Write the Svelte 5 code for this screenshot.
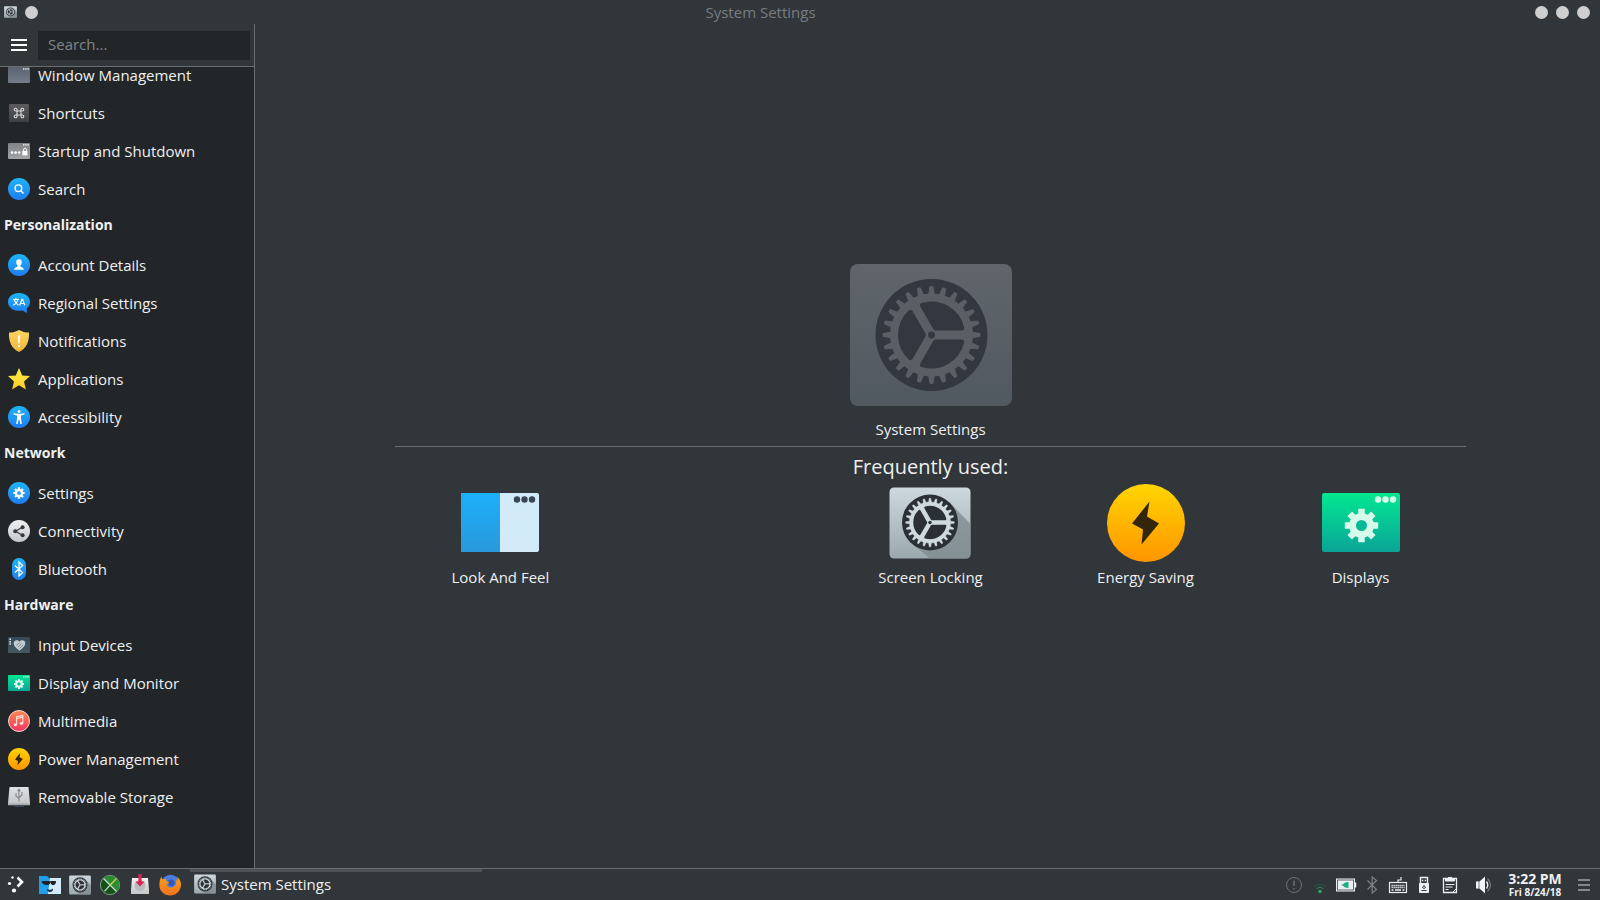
<script>
  let query = $state('');

  const sections = [
    {
      title: '',
      items: [
        ['window', 'Window Management'],
        ['shortcuts', 'Shortcuts'],
        ['startup', 'Startup and Shutdown'],
        ['search', 'Search']
      ]
    },
    {
      title: 'Personalization',
      items: [
        ['account', 'Account Details'],
        ['regional', 'Regional Settings'],
        ['notifications', 'Notifications'],
        ['applications', 'Applications'],
        ['accessibility', 'Accessibility']
      ]
    },
    {
      title: 'Network',
      items: [
        ['settings', 'Settings'],
        ['connectivity', 'Connectivity'],
        ['bluetooth', 'Bluetooth']
      ]
    },
    {
      title: 'Hardware',
      items: [
        ['input', 'Input Devices'],
        ['display', 'Display and Monitor'],
        ['multimedia', 'Multimedia'],
        ['power', 'Power Management'],
        ['storage', 'Removable Storage']
      ]
    }
  ];

  const launchers = [
    ['files', 'File manager'],
    ['gear', 'System Settings'],
    ['green', 'Graphics'],
    ['download', 'Downloads'],
    ['firefox', 'Firefox']
  ];

  const tray = [
    ['alert', 'Alerts'],
    ['wifi', 'Wireless'],
    ['battery', 'Battery'],
    ['bt', 'Bluetooth'],
    ['keyboard', 'Keyboard'],
    ['usb', 'Devices'],
    ['clipboard', 'Clipboard']
  ];

  // Closed outline of a gear centred on the origin.
  function gear(teeth, outer, root, topHalf, rootHalf) {
    const at = (r, deg) => {
      const a = (deg * Math.PI) / 180;
      return (r * Math.cos(a)).toFixed(2) + ' ' + (r * Math.sin(a)).toFixed(2);
    };
    let d = '';
    for (let i = 0; i < teeth; i++) {
      const c = (360 / teeth) * i;
      d += (i ? 'L' : 'M') + at(root, c - rootHalf) + 'L' + at(outer, c - topHalf);
      d += 'L' + at(outer, c + topHalf) + 'L' + at(root, c + rootHalf);
    }
    return d + 'Z';
  }

  const fineGear = gear(24, 48.5, 41, 1.7, 3.8);
  const cog = gear(8, 17, 12.5, 11, 15);
</script>

{#snippet wheel(metal, dark)}
  <circle r="56" fill={dark} />
  <path d={fineGear} fill={metal} stroke={metal} stroke-linejoin="round" />
  {#each [0, 120, 240] as turn}
    <path
      d="M4.04-7H30.2A31 31 0 0 0-9.04-29.65Z"
      transform="rotate({turn})"
      fill={dark}
      stroke={dark}
      stroke-width="5"
      stroke-linejoin="round"
    />
  {/each}
  <circle r="3.4" fill={dark} />
{/snippet}

{#snippet plate()}
  <rect x="1" y="11" width="162" height="142" rx="9" fill="url(#g-plate)" />
  <path d="M122 42L163 84V144Q163 153 154 153H82L43 121Z" fill="#7d888d" opacity=".75" />
  <g transform="translate(82 81)">{@render wheel('#cfdadf', '#2b3036')}</g>
{/snippet}

{#snippet cogShape(fill, hole)}
  <path d={cog} fill={fill} />
  <circle r="5.5" fill={hole} />
{/snippet}

{#snippet sideIcon(name)}
  <svg class="side-icon" viewBox="0 0 22 22" aria-hidden="true">
    {#if name === 'window'}
      <rect y="3" width="22" height="16" rx="1" fill="url(#g-slate)" />
      <path d="M15 5h1.4M17.2 5h1.4M19.4 5h1.4" stroke="#e5e9ec" stroke-width="1.3" />
    {:else if name === 'shortcuts'}
      <rect x="1" y="2" width="20" height="18" rx="1" fill="url(#g-dark)" />
      <path
        d="M9 9h4v4H9ZM9 9H7.8A1.4 1.4 0 1 1 9 7.8ZM13 9V7.8A1.4 1.4 0 1 1 14.2 9ZM13 13h1.2A1.4 1.4 0 1 1 13 14.2ZM9 13v1.2A1.4 1.4 0 1 1 7.8 13Z"
        fill="none" stroke="#dcdcdc" stroke-width="1.1"
      />
    {:else if name === 'startup'}
      <rect y="3" width="22" height="16" rx="1" fill="url(#g-grey)" />
      <path d="M15 4.8h1.4M17.2 4.8h1.4M19.4 4.8h1.4" stroke="#fff" stroke-width="1.3" />
      <circle cx="4" cy="12.6" r="1.3" fill="#fff" />
      <circle cx="7.6" cy="12.6" r="1.3" fill="#fff" />
      <circle cx="11.2" cy="12.6" r="1.3" fill="#fff" />
      <rect x="14.4" y="11" width="5" height="4.4" fill="#fff" />
      <path d="M15.6 11V9.6a1.4 1.4 0 0 1 2.8 0V11" fill="none" stroke="#fff" />
    {:else if name === 'search'}
      <circle cx="11" cy="11" r="11" fill="url(#g-blue)" />
      <circle cx="10.4" cy="10.2" r="3.3" fill="none" stroke="#fff" stroke-width="1.4" />
      <path d="M12.8 12.6L15.4 15.4" stroke="#fff" stroke-width="1.5" />
    {:else if name === 'account'}
      <circle cx="11" cy="11" r="11" fill="url(#g-blue)" />
      <path
        d="M11 5.2c1.8 0 2.8 1.3 2.8 3 0 1.500-.6 2.500-1.400 3v1.200c.8.8 3.400.8 3.600 3.400H6c.2-2.600 2.800-2.600 3.600-3.400v-1.200c-.8-.5-1.400-1.500-1.400-3 0-1.700 1-3 2.800-3Z"
        fill="#fff"
      />
    {:else if name === 'regional'}
      <path d="M11 1c6.200 0 11 3.800 11 9 0 2.700-1.300 5-3.300 6.600L19 21l-4.700-2.400C6.400 19.800 0 16 0 10c0-5.200 4.800-9 11-9Z" fill="url(#g-blue)" />
      <path d="M5 7.500h6M8 6v1.500M9.800 7.500C9.300 10.300 7.500 12 5.200 13.200M6.300 7.500c.5 2.500 2 4.500 4.400 5.700M11.700 13.400l2.200-6h.7l2.200 6M12.500 11.500h3.500" fill="none" stroke="#fff" stroke-width="1.2" />
    {:else if name === 'notifications'}
      <path d="M11 0c3 1.700 6.500 2.500 10 2.600C21.400 12 18.500 18.600 11 22 3.500 18.600.6 12 1 2.600 4.500 2.500 8 1.700 11 0Z" fill="url(#g-gold)" />
      <path d="M10 5.500h2l-.3 8h-1.400Z" fill="#fff" />
      <circle cx="11" cy="16" r="1.100" fill="#fff" />
    {:else if name === 'applications'}
      <path d="M11 0l3.200 7.400 7.800.7-6 5.300 1.900 8L11 17.300 4.100 21.400l1.900-8-6-5.300 7.800-.7Z" fill="url(#g-yellow)" />
    {:else if name === 'accessibility'}
      <circle cx="11" cy="11" r="11" fill="url(#g-blue)" />
      <circle cx="11" cy="5.400" r="1.500" fill="#fff" />
      <path d="M5.500 7.200l4 .5h3l4-.5v1.300l-3.500.9v3.100l.8 5.500h-1.500L11.400 14h-.8l-.9 4H8.200l.8-5.500V9.400l-3.500-.9Z" fill="#fff" />
    {:else if name === 'settings'}
      <circle cx="11" cy="11" r="11" fill="url(#g-blue)" />
      <g transform="translate(11 11) scale(.34)">{@render cogShape('#fff', '#2393ee')}</g>
    {:else if name === 'connectivity'}
      <circle cx="11" cy="11" r="11" fill="url(#g-white)" />
      <path d="M14.500 7.200L7.400 11.200l7.100 4" fill="none" stroke="#34383c" stroke-width="1.200" />
      <circle cx="7.200" cy="11.200" r="2" fill="#34383c" />
      <circle cx="14.600" cy="7.200" r="2" fill="#34383c" />
      <circle cx="14.600" cy="15.200" r="2" fill="#34383c" />
    {:else if name === 'bluetooth'}
      <rect x="4" width="14" height="22" rx="7" fill="url(#g-blue)" />
      <path d="M7 7.400l7.600 7L11 18V4l3.600 3.600-7.600 7" fill="none" stroke="#fff" stroke-width="1.300" />
    {:else if name === 'input'}
      <rect y="3" width="22" height="16" rx="1" fill="url(#g-teal)" />
      <path d="M2.200 4.500v1.500M2.200 6.900v1.500M2.200 9.300v1.500" stroke="#eef3f5" stroke-width="1.500" />
      <path d="M11.500 16.800C8 14 5.700 11.900 5.700 9.200c0-3 3.800-4.200 5.800-1.500 2-2.700 5.800-1.500 5.800 1.500 0 2.700-2.300 4.800-5.800 7.600Z" fill="#c3ccd1" />
      <path d="M8.500 11.500l3-3M10 13l3.500-3.500M11.700 14.400l3.300-3.300" stroke="#6c7b83" stroke-width=".8" />
    {:else if name === 'display'}
      <rect y="3" width="22" height="16" rx="1" fill="url(#g-green)" />
      <path d="M15 4.800h1.400M17.200 4.800h1.400M19.400 4.800h1.400" stroke="#d5fbea" stroke-width="1.300" />
      <g transform="translate(11 12) scale(.3)">{@render cogShape('#e0fcf0', '#08be93')}</g>
    {:else if name === 'multimedia'}
      <circle cx="11" cy="11" r="10.500" fill="url(#g-red)" stroke="#fbd5d0" />
      <path d="M8.600 14.500V6.800l6.200-1.400v7.700M8.600 8.500l6.200-1.400" fill="none" stroke="#ffe3dc" stroke-width="1.100" />
      <ellipse cx="7.300" cy="14.800" rx="1.800" ry="1.400" fill="#ffe3dc" />
      <ellipse cx="13.500" cy="13.400" rx="1.800" ry="1.400" fill="#ffe3dc" />
    {:else if name === 'power'}
      <circle cx="11" cy="11" r="11" fill="url(#g-orange)" />
      <path d="M12.200 4.800L7 11.400l3 1.700-.6 4.300 5.400-6.400-3.200-1.700Z" fill="#33260a" />
    {:else if name === 'storage'}
      <path d="M1.500 1h19L22 17v2H0v-2Z" fill="url(#g-silver)" />
      <path d="M.3 17.500h21.400v1.800H.3Z" fill="#a5a8ab" />
      <path d="M6 20.500h10" stroke="#34445a" />
      <path d="M11 15.500V4M8 7v3l3 2.500M14 6v3l-3 2.500M9.600 5.200L11 3.200l1.400 2" fill="none" stroke="#83888c" stroke-width="1.100" />
    {/if}
  </svg>
{/snippet}

{#snippet appIcon(name)}
  <svg class="app-icon" viewBox="0 0 22 22" aria-hidden="true">
    {#if name === 'files'}
      <path d="M0 2h8l2 2h1v16H0Z" fill="#219fe8" />
      <path d="M11 4h11v16H9Z" fill="#d4ebf8" />
      <path d="M2.500 7h7.500l1 .6 1-.6h5c0 2.600-1 4-2.600 4-1.500 0-2.500-1-3-2.600-.5 1.600-1.600 2.600-3.400 2.600C4.800 11 3 9.600 2.500 7Z" fill="#1c2227" />
      <path d="M8 15c2 1.200 4.500 1 6-.6.300 2-1 3.600-3 3.600-1.600 0-2.800-1.200-3-3Z" fill="#1c3040" />
    {:else if name === 'gear'}
      <g transform="scale(.1342)">{@render plate()}</g>
    {:else if name === 'green'}
      <circle cx="11" cy="11" r="9.600" fill="#12521a" stroke="#8ba58c" stroke-width=".9" />
      <path d="M4 4.600L17.600 17.800A9.300 9.300 0 0 0 11 1.900 9.300 9.300 0 0 0 4 4.600Z" fill="#2c8c33" />
      <path d="M4.500 4.500l13 13" stroke="#cfd9cf" stroke-width="1.300" />
      <path d="M17.500 4.500l-6.500 6.700" stroke="#d6cf4a" stroke-width="1.300" />
      <path d="M11 11.200l-5.500 6" stroke="#b9c9b9" stroke-width="1.300" />
    {:else if name === 'download'}
      <path d="M3 4h16l1 12v4H2v-4Z" fill="url(#g-white)" />
      <circle cx="11" cy="11.500" r="5.500" fill="#b9bcbf" />
      <path d="M9.400 0h3.200v7.500h3L11 12.600 6.400 7.500h3Z" fill="#dc2455" />
    {:else if name === 'firefox'}
      <circle cx="11.500" cy="10" r="9.300" fill="#4b7ce0" />
      <path d="M8 7.500c1-1.500 4-2.600 5.600-1.700 2.200 1.200 2.500 3.400 1.200 5.200-1.300 1.600-3.600 1.500-4.600.3Z" fill="#3159b4" />
      <path
        d="M2.500 2.500c0 1.200.3 2 .9 2.700 1.300-.5 2.800-.4 4 .3-.3.900-.2 1.500.8 2.100 1 .1 1.900.3 1.900.8-.2 1-2.200 1.200-2.400 2.200 1 3.600 6.200 3.800 8.400 1 1.500-2 1.500-4.600.4-6.600 1.400.6 2.100 1.500 2.500 2.600.2-1.800-.2-3.400-1.500-5 3.500 2.200 5 5.700 4.400 9.400C21 17.500 17 21.500 11.200 21.500 5 21.500.4 17 .4 11c0-3.400.6-6.600 2.100-8.500Z"
        fill="url(#g-fox)"
      />
    {/if}
  </svg>
{/snippet}

{#snippet trayIcon(name)}
  <svg class="tray-icon" viewBox="0 0 22 22" aria-hidden="true" fill="none" stroke="#eceff1">
    {#if name === 'alert'}
      <circle cx="11" cy="11" r="7.500" stroke="#6c7175" />
      <path d="M11 6.500v5.500M11 14v1.500" stroke="#6c7175" stroke-width="1.400" />
    {:else if name === 'wifi'}
      <path d="M5 12.500Q11 8.500 17 12.500" stroke="#2c5a44" />
      <path d="M7.500 14.500Q11 12 14.500 14.500" stroke="#2c8a5c" />
      <circle cx="11" cy="17.500" r="1.700" fill="#27ae60" stroke="none" />
    {:else if name === 'battery'}
      <rect x="1" y="4.500" width="19" height="13" fill="#eceff1" stroke="none" />
      <rect x="20" y="8.500" width="1.300" height="5" fill="#eceff1" stroke="none" />
      <rect x="2.500" y="6" width="16" height="10" stroke="#5e666b" />
      <path d="M13.500 8v6c-3 0-5-1-5.500-2.400H6.500V10.400H8C8.500 9 10.500 8 13.500 8Z" fill="#19ae82" stroke="none" />
    {:else if name === 'bt'}
      <path d="M6.500 6.500l9 9L11.200 19V3l4.300 3.500-9 9" stroke="#7d8286" stroke-width="1.200" />
    {:else if name === 'keyboard'}
      <rect x="2.500" y="8.500" width="17" height="10" stroke-width="1.200" />
      <path d="M11 8V6h3V3" stroke-width="1.200" />
      <path d="M4.500 11.500h13M4.500 13.500h13" stroke-width="1.300" stroke-dasharray="1.300 .7" />
      <path d="M4.500 16h2M8 16h6M15.500 16h2" stroke-width="1.300" />
    {:else if name === 'usb'}
      <path d="M7.500 9.500V3.500h7v6" stroke-width="1.500" />
      <path d="M9 6.500h1.300M11.700 6.500h1.300" stroke-width="1.300" />
      <path d="M6.500 9.500h9v9h-9Z" fill="#eceff1" />
      <path d="M11 11.500l1.500 2-1.500 1-1.500-1ZM8.500 16.500h5" stroke="#31363b" />
    {:else if name === 'clipboard'}
      <path d="M4.500 4.500h13v14h-13Z" stroke-width="1.300" />
      <path d="M6.500 4.500h9v2.500h-9Z" fill="#eceff1" />
      <path d="M9 3.500h4" />
      <path d="M6.500 10.500h9M6.500 13h7M6.500 15.500h3M14 18l3-3" />
    {:else if name === 'volume'}
      <path d="M3 7.500h3.500L12 2.500V19.500L6.500 14.500H3Z" fill="#f3f5f6" stroke="none" />
      <path d="M6 7.500v7" stroke="#777c80" />
      <path d="M13.500 7.500Q16 11 13.500 14.500" stroke-width="1.400" />
      <path d="M14.500 4.500Q20.500 11 14.500 17.500" stroke="#73787c" stroke-width="1.200" />
    {/if}
  </svg>
{/snippet}

<svg class="defs" width="0" height="0" aria-hidden="true">
  <defs>
    {#each [
      ['g-plate', '#cdd9df', '#9ba8ad'],
      ['g-muted', '#5f656b', '#515960'],
      ['g-slate', '#5a6270', '#747d89'],
      ['g-dark', '#5b5b5d', '#3f4042'],
      ['g-grey', '#808284', '#a2a4a5'],
      ['g-blue', '#1eb5f8', '#1f7df0'],
      ['g-sky', '#1cb0fb', '#2a98db'],
      ['g-gold', '#fbd763', '#f0b53c'],
      ['g-yellow', '#fdf04a', '#fbcd25'],
      ['g-white', '#f2f2f3', '#c4c6c8'],
      ['g-silver', '#e0e1e3', '#c2c4c7'],
      ['g-teal', '#34495a', '#45585f'],
      ['g-green', '#02e791', '#0aa497'],
      ['g-red', '#fb8a50', '#f63364'],
      ['g-orange', '#ffd500', '#ff9500'],
      ['g-fox', '#f9a01e', '#f2701c']
    ] as [id, from, to]}
      <linearGradient {id} x2="0" y2="1">
        <stop stop-color={from} />
        <stop offset="1" stop-color={to} />
      </linearGradient>
    {/each}
  </defs>
</svg>

<div class="desktop">
  <header class="titlebar">
    <svg class="title-icon" viewBox="0 10 164 144" aria-hidden="true">{@render plate()}</svg>
    <button class="dot" aria-label="Pin"></button>
    <h1>System Settings</h1>
    <div class="controls">
      <button class="dot" aria-label="Minimize"></button>
      <button class="dot" aria-label="Maximize"></button>
      <button class="dot" aria-label="Close"></button>
    </div>
  </header>

  <div class="body">
    <aside>
      <div class="toolbar">
        <button class="menu" aria-label="Menu"><i></i><i></i><i></i></button>
        <input type="text" placeholder="Search..." aria-label="Search" bind:value={query} />
      </div>
      <div class="scroller">
        <nav aria-label="Categories">
          {#each sections as section}
            {#if section.title}<h2>{section.title}</h2>{/if}
            {#each section.items as [icon, label]}
              <a href="#{icon}">{@render sideIcon(icon)}<span>{label}</span></a>
            {/each}
          {/each}
        </nav>
      </div>
    </aside>

    <main>
      <div class="welcome">
        <svg class="hero" viewBox="0 0 162 142" aria-hidden="true">
          <rect width="162" height="142" rx="8" fill="url(#g-muted)" />
          <g transform="translate(81.500 71)">{@render wheel('#595f65', '#333840')}</g>
        </svg>
        <p class="hero-name">System Settings</p>
        <hr />
        <h2>Frequently used:</h2>
        <div class="frequent">
          <a href="#look">
            <svg viewBox="0 0 80 80" aria-hidden="true">
              <rect x="1" y="10" width="78" height="59" rx="2" fill="#d3eaf8" />
              <path d="M40 10H3q-2 0-2 2V67q0 2 2 2H40Z" fill="url(#g-sky)" />
              <g fill="#3a4654">
                <circle cx="57" cy="16.500" r="3.200" /><circle cx="64.500" cy="16.500" r="3.200" /><circle cx="72" cy="16.500" r="3.200" />
              </g>
            </svg>
            <span>Look And Feel</span>
          </a>
          <a href="#locking" class="third">
            <svg viewBox="0 2 164 160" aria-hidden="true">{@render plate()}</svg>
            <span>Screen Locking</span>
          </a>
          <a href="#energy">
            <svg viewBox="0 0 80 80" aria-hidden="true">
              <circle cx="40" cy="40" r="39" fill="url(#g-orange)" />
              <path d="M43.500 18.500L26 40.500l11 6-1.500 15L53 40.500l-12-7Z" fill="#33260a" />
            </svg>
            <span>Energy Saving</span>
          </a>
          <a href="#displays">
            <svg viewBox="0 0 80 80" aria-hidden="true">
              <rect x="1" y="10" width="78" height="59" rx="2" fill="url(#g-green)" />
              <g fill="#d5fbea">
                <circle cx="57" cy="16.500" r="3.200" /><circle cx="64.500" cy="16.500" r="3.200" /><circle cx="72" cy="16.500" r="3.200" />
              </g>
              <g transform="translate(40.500 42.500)">{@render cogShape('#d5fbea', '#07b994')}</g>
            </svg>
            <span>Displays</span>
          </a>
        </div>
      </div>
    </main>
  </div>

  <footer>
    <button class="launcher" aria-label="Application launcher">
      <svg class="app-icon" viewBox="0 0 22 22" aria-hidden="true">
        <path d="M11.500 3.500l4.500 4.500-4.500 4.500" fill="none" stroke="#fff" stroke-width="2.600" />
        <g fill="#fff">
          <circle cx="6.500" cy="3.500" r="1.200" /><circle cx="3.500" cy="9.500" r="1.600" /><circle cx="8" cy="16.500" r="2.100" />
        </g>
      </svg>
    </button>
    <div class="pinned">
      {#each launchers as [icon, label]}
        <button aria-label={label}>{@render appIcon(icon)}</button>
      {/each}
    </div>
    <button class="task">{@render appIcon('gear')}<span>System Settings</span></button>
    <div class="tray">
      <div class="status">
        {#each tray as [icon, label]}
          <button aria-label={label}>{@render trayIcon(icon)}</button>
        {/each}
      </div>
      <button aria-label="Volume">{@render trayIcon('volume')}</button>
      <button class="clock"><b>3:22 PM</b><small>Fri 8/24/18</small></button>
      <button class="panel-menu" aria-label="Panel menu"><i></i><i></i><i></i></button>
    </div>
  </footer>
</div>

<style>
  :global(body) {
    background: #31363b;
  }
  .desktop {
    display: flex;
    flex-direction: column;
    height: 100vh;
    overflow: hidden;
    background: #31363b;
    color: #eff0f1;
    font: 15px/20px 'Open Sans', 'Noto Sans', sans-serif;
  }
  .defs {
    position: absolute;
  }
  h1, h2, p {
    margin: 0;
  }
  button {
    margin: 0;
    padding: 0;
    border: 0;
    background: none;
    color: inherit;
    font: inherit;
  }
  a {
    color: inherit;
    text-decoration: none;
  }
  svg {
    display: block;
    flex: none;
  }

  .titlebar {
    display: flex;
    align-items: center;
    flex: none;
    height: 24px;
    padding: 0 10px 0 4px;
  }
  .title-icon {
    width: 13px;
    height: 12px;
    margin-right: 8px;
  }
  .dot {
    width: 13px;
    height: 13px;
    border-radius: 50%;
    background: #cfcfcf;
  }
  h1 {
    flex: 1;
    margin-right: 52px;
    color: #777c80;
    font-size: 15px;
    font-weight: 400;
    text-align: center;
  }
  .controls {
    display: flex;
    gap: 8px;
  }

  .body {
    display: flex;
    flex: 1;
    min-height: 0;
  }
  aside {
    display: flex;
    flex-direction: column;
    flex: none;
    width: 254px;
    border-right: 1px solid #6a6e71;
    background: #232629;
  }
  .toolbar {
    display: flex;
    align-items: center;
    flex: none;
    gap: 10px;
    height: 42px;
    padding: 0 4px 0 11px;
    border-bottom: 1px solid #6a6e71;
    background: #31363b;
  }
  .menu {
    display: flex;
    flex-direction: column;
    gap: 3px;
    width: 17px;
  }
  .menu i {
    height: 2px;
    margin-right: 1px;
    background: #fff;
  }
  input {
    flex: 1;
    min-width: 0;
    box-sizing: border-box;
    height: 29px;
    padding: 0 10px 2px;
    border: 0;
    outline: 0;
    background: #232629;
    color: #eff0f1;
    font: inherit;
  }
  input::placeholder {
    color: #7f8487;
    opacity: 1;
  }
  .scroller {
    flex: 1;
    min-height: 0;
    overflow: hidden;
  }
  nav {
    margin-top: -11px;
    line-height: 16px;
  }
  nav a {
    display: flex;
    align-items: center;
    gap: 8px;
    height: 38px;
    padding-left: 8px;
  }
  nav h2 {
    height: 38px;
    padding-left: 4px;
    font-size: 14px;
    line-height: 34px;
  }
  .side-icon {
    width: 22px;
    height: 22px;
  }

  main {
    display: flex;
    align-items: center;
    justify-content: center;
    flex: 1;
    padding: 0 0 42px 6px;
  }
  .welcome {
    display: flex;
    flex-direction: column;
    align-items: center;
    width: 80%;
  }
  .hero {
    width: 162px;
    height: 142px;
  }
  .hero-name {
    margin-top: 13px;
  }
  hr {
    width: 100%;
    height: 1px;
    margin: 7px 0 6px;
    border: 0;
    background: #6a6e71;
  }
  main h2 {
    font-size: 20px;
    font-weight: 400;
    line-height: 28px;
  }
  .frequent {
    display: grid;
    grid-template-columns: repeat(5, 1fr);
    align-self: stretch;
    margin: 2px -2px 0;
  }
  .frequent a {
    display: flex;
    flex-direction: column;
    align-items: center;
    gap: 4px;
  }
  .frequent svg {
    height: 80px;
  }
  .third {
    grid-column: 3;
  }

  footer {
    display: flex;
    align-items: center;
    flex: none;
    height: 31px;
    border-top: 1px solid #6a6e71;
  }
  .app-icon {
    width: 22px;
    height: 22px;
  }
  .launcher {
    margin-left: 6px;
  }
  .pinned {
    display: flex;
    gap: 8px;
    margin-left: 11px;
  }
  .task {
    display: flex;
    align-items: center;
    gap: 5px;
    box-sizing: border-box;
    width: 292px;
    height: 31px;
    margin-left: 9px;
    padding: 0 4px 4px;
    border-top: 3px solid #4d5257;
  }
  .tray {
    display: flex;
    align-items: center;
    gap: 8px;
    margin-left: auto;
    padding-right: 5px;
  }
  .status {
    display: flex;
  }
  .tray-icon {
    width: 22px;
    height: 22px;
    margin: 0 2px;
  }
  .clock {
    display: flex;
    flex-direction: column;
    align-items: center;
    width: 60px;
  }
  .clock b {
    font-size: 14px;
    line-height: 16px;
  }
  .clock small {
    font-size: 10px;
    font-weight: 700;
    line-height: 11px;
    white-space: nowrap;
  }
  .panel-menu {
    display: flex;
    flex-direction: column;
    align-items: center;
    gap: 3px;
    width: 22px;
  }
  .panel-menu i {
    width: 12px;
    height: 2px;
    background: #85898c;
  }
</style>
